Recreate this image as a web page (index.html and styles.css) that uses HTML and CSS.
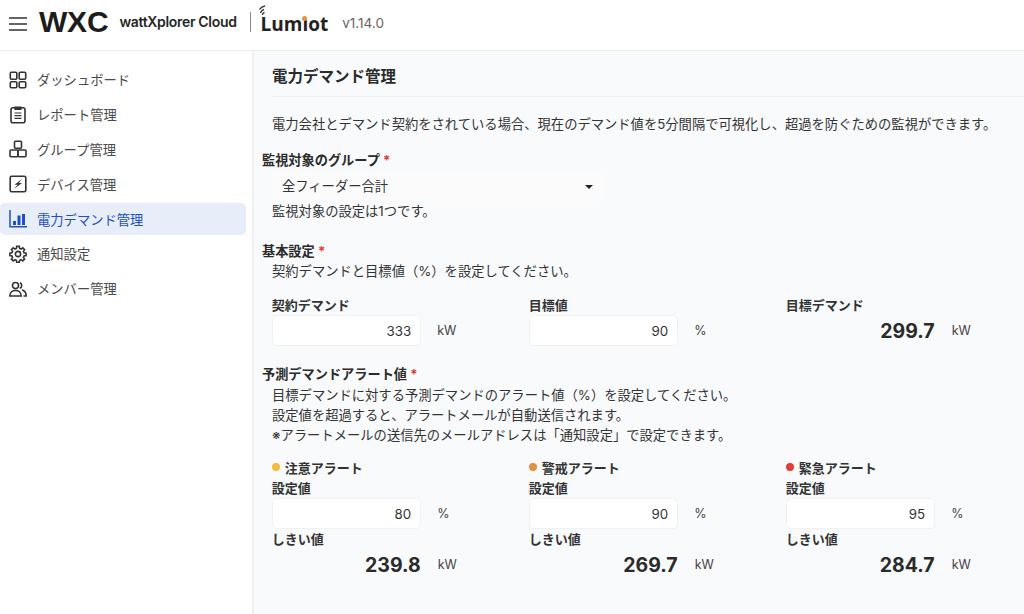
FILE: index.html
```html
<!DOCTYPE html>
<html lang="ja">
<head>
  <meta charset="UTF-8" />
  <title>wattXplorer Cloud</title>
  <link rel="stylesheet" href="styles.css">
</head>
<body>
  <header class="topbar">
    <svg class="menu-icon" viewBox="0 0 18 14" width="18" height="14"><path d="M0 1h18M0 7h18M0 13h18" stroke="#333" stroke-width="1.3" fill="none"/></svg>
    <span class="logo-wxc">WXC</span>
    <span class="logo-name">wattXplorer Cloud</span>
    <span class="logo-sep"></span>
    <span class="logo-lumiot">
      <svg class="lumiot-wifi" viewBox="0 0 12 12" width="12" height="12"><path d="M1.500 8A5 5 0 0 1 5 4.500M.5 4.500A8 8 0 0 1 6 1M3.500 10A2.500 2.500 0 0 1 5.500 7.500" stroke="#333" stroke-width="1.300" fill="none"/></svg>
      Lumıot<span class="lumiot-dot"></span>
    </span>
    <span class="version">v1.14.0</span>
  </header>

  <div class="layout">
    <nav class="sidebar">
      <a class="nav-item">
        <svg viewBox="0 0 18 18" width="18" height="18"><g fill="none" stroke="#333" stroke-width="1.600"><rect x="1.300" y="1.300" width="6.500" height="7" rx="1"/><rect x="10.200" y="1.300" width="6.500" height="7" rx="1"/><rect x="1.300" y="10.700" width="6.500" height="6" rx="1"/><rect x="10.200" y="10.700" width="6.500" height="6" rx="1"/></g></svg>
        ダッシュボード
      </a>
      <a class="nav-item">
        <svg viewBox="0 0 18 18" width="18" height="18"><rect x="2" y="1.800" width="14" height="15" rx="2" fill="none" stroke="#333" stroke-width="1.600"/><path d="M6 1h6v2.500H6zM5.500 7h7M5.500 9.700h7M5.500 12.400h7" stroke="#333" stroke-width="1.200" fill="#333"/></svg>
        レポート管理
      </a>
      <a class="nav-item">
        <svg viewBox="0 0 18 18" width="18" height="18"><g fill="none" stroke="#333" stroke-width="1.600"><rect x="5.500" y="1.300" width="7" height="7" rx="1"/><rect x="1" y="10" width="8" height="6.800" rx="1"/><rect x="9" y="10" width="8" height="6.800" rx="1"/></g></svg>
        グループ管理
      </a>
      <a class="nav-item">
        <svg viewBox="0 0 18 18" width="18" height="18"><rect x="1.200" y="1.200" width="15.600" height="15.600" rx="1.500" fill="none" stroke="#333" stroke-width="1.600"/><path d="M13 4 5.500 9.800h3.200L5 14l8-6H9.800z" fill="#333"/></svg>
        デバイス管理
      </a>
      <a class="nav-item active">
        <svg viewBox="0 0 18 18" width="18" height="18"><path d="M1 0v16.800h17" fill="none" stroke="#1f4fc4" stroke-width="1.500"/><path d="M4 11h3v4H4zM8.500 5.500h3V15h-3zM13 4h3v11h-3z" fill="#1f4fc4"/></svg>
        電力デマンド管理
      </a>
      <a class="nav-item">
        <svg viewBox="0 0 24 24" width="18" height="18"><path fill="none" stroke="#333" stroke-width="2.100" d="M10.300 1.800h3.400l.5 2.800 1.900.8 2.300-1.600 2.400 2.400-1.600 2.300.8 1.900 2.800.5v3.200l-2.800.5-.8 1.900 1.600 2.300-2.400 2.400-2.300-1.600-1.900.8-.5 2.800h-3.400l-.5-2.800-1.900-.8-2.300 1.600-2.400-2.400 1.600-2.300-.8-1.900-2.800-.5v-3.200l2.800-.5.8-1.900-1.600-2.300 2.400-2.400 2.300 1.600 1.900-.8z"/><circle cx="12" cy="12" r="3.500" fill="none" stroke="#333" stroke-width="2.100"/></svg>
        通知設定
      </a>
      <a class="nav-item">
        <svg viewBox="0 0 18 18" width="18" height="18"><g fill="none" stroke="#333" stroke-width="1.600"><circle cx="6.500" cy="5.500" r="3"/><path d="M.8 16c0-7.500 11.400-7.500 11.400 0z"/><path d="M10.800 2.700a3 3 0 0 1 0 5.600M13 10c2.700.6 4.200 2.800 4.200 6h-2.700"/></g></svg>
        メンバー管理
      </a>
    </nav>

    <main class="content">
      <h1 class="page-title">電力デマンド管理</h1>
      <p class="lead">電力会社とデマンド契約をされている場合、現在のデマンド値を5分間隔で可視化し、超過を防ぐための監視ができます。</p>

      <section class="group-section">
        <h2 class="section-label">監視対象のグループ <span class="req">*</span></h2>
        <div class="select-box">全フィーダー合計<span class="caret"></span></div>
        <p class="note">監視対象の設定は1つです。</p>
      </section>

      <section class="basic-section">
        <h2 class="section-label">基本設定 <span class="req">*</span></h2>
        <p class="note">契約デマンドと目標値（%）を設定してください。</p>
        <div class="field-grid">
          <div>
            <div class="field-label">契約デマンド</div>
            <div class="field-row"><div class="num-input">333</div><span class="unit">kW</span></div>
          </div>
          <div>
            <div class="field-label">目標値</div>
            <div class="field-row"><div class="num-input">90</div><span class="unit">%</span></div>
          </div>
          <div>
            <div class="field-label">目標デマンド</div>
            <div class="field-row"><div class="big-value">299.7</div><span class="unit">kW</span></div>
          </div>
        </div>
      </section>

      <section class="alert-section">
        <h2 class="section-label">予測デマンドアラート値 <span class="req">*</span></h2>
        <div class="note-block">
          <p class="note">目標デマンドに対する予測デマンドのアラート値（%）を設定してください。</p>
          <p class="note">設定値を超過すると、アラートメールが自動送信されます。</p>
          <p class="note">※アラートメールの送信先のメールアドレスは「通知設定」で設定できます。</p>
        </div>
        <div class="field-grid alert-grid">
          <div>
            <div class="alert-title"><span class="dot yellow"></span>注意アラート</div>
            <div class="field-label">設定値</div>
            <div class="field-row"><div class="num-input">80</div><span class="unit">%</span></div>
            <div class="field-label">しきい値</div>
            <div class="field-row"><div class="big-value">239.8</div><span class="unit">kW</span></div>
          </div>
          <div>
            <div class="alert-title"><span class="dot orange"></span>警戒アラート</div>
            <div class="field-label">設定値</div>
            <div class="field-row"><div class="num-input">90</div><span class="unit">%</span></div>
            <div class="field-label">しきい値</div>
            <div class="field-row"><div class="big-value">269.7</div><span class="unit">kW</span></div>
          </div>
          <div>
            <div class="alert-title"><span class="dot red"></span>緊急アラート</div>
            <div class="field-label">設定値</div>
            <div class="field-row"><div class="num-input">95</div><span class="unit">%</span></div>
            <div class="field-label">しきい値</div>
            <div class="field-row"><div class="big-value">284.7</div><span class="unit">kW</span></div>
          </div>
        </div>
      </section>
    </main>
  </div>
</body>
</html>
```

FILE: styles.css
```css
* {
  margin: 0;
  padding: 0;
  box-sizing: border-box;
}

html, body {
  height: 100%;
  overflow: hidden;
}

body {
  font-family: "Inter", "Noto Sans CJK JP", sans-serif;
  font-size: 13.3px;
  color: #333;
  background: #fff;
  display: flex;
  flex-direction: column;
}

/* Header */
.topbar {
  height: 51px;
  flex-shrink: 0;
  display: flex;
  align-items: center;
  padding-left: 9px;
  padding-bottom: 7px;
  border-bottom: 1px solid #eceef0;
  background: #fff;
}

.menu-icon {
  margin-right: 12px;
  margin-top: 5px;
}

.logo-wxc {
  font-family: "Liberation Sans", sans-serif;
  font-size: 30px;
  font-weight: 700;
  color: #1c1c1c;
  letter-spacing: -0.2px;
  margin-right: 11px;
}

.logo-name {
  font-size: 14px;
  font-weight: 600;
  color: #262626;
  letter-spacing: -0.32px;
  margin-right: 13px;
}

.logo-sep {
  width: 1px;
  height: 20px;
  background: #888;
  margin-right: 10px;
}

.logo-lumiot {
  position: relative;
  font-family: "Open Sans", sans-serif;
  font-size: 19px;
  font-weight: 700;
  line-height: 28px;
  color: #222;
  margin-right: 14px;
  padding-top: 4px;
}

.lumiot-wifi {
  position: absolute;
  left: -2px;
  top: -1px;
}

.lumiot-dot {
  position: absolute;
  left: 41px;
  top: 10px;
  width: 5px;
  height: 5px;
  border-radius: 50%;
  background: #e8933a;
}

.version {
  font-size: 13.500px;
  color: #666;
  margin-top: 2px;
}

/* Sidebar */
.layout {
  flex: 1;
  display: flex;
  min-height: 0;
}

.sidebar {
  width: 254px;
  flex-shrink: 0;
  padding-top: 13px;
  border-right: 2px solid #eef0f2;
  background: #fff;
}

.nav-item {
  display: flex;
  align-items: center;
  gap: 10px;
  width: 246px;
  height: 31.500px;
  margin-bottom: 3.330px;
  padding-left: 9px;
  font-size: 13.300px;
  color: #4a4a4a;
}

.nav-item.active {
  background: #e7eefa;
  color: #1f4fc4;
  border-radius: 5px;
}

/* Main */
.content {
  flex: 1;
  background: #f9fafc;
  padding-left: 8px;
  overflow: hidden;
}

.page-title {
  font-size: 15.500px;
  font-weight: 700;
  color: #2b2b2b;
  height: 46px;
  line-height: 52px;
  margin-left: 10px;
  border-bottom: 1px solid #edeff1;
}

.lead {
  margin: 17px 0 0 10px;
  line-height: 20px;
}

.section-label {
  font-size: 13.200px;
  font-weight: 700;
  color: #2b2b2b;
  line-height: 20px;
}

.req {
  color: #e53935;
}

.note {
  margin-left: 10px;
  line-height: 20px;
}

.group-section {
  margin-top: 16px;
}

.select-box {
  position: relative;
  width: 331px;
  height: 29px;
  margin: 2px 0 0 10px;
  padding-left: 10px;
  line-height: 29px;
  background: #fbfbfc;
  border-radius: 4px;
}

.caret {
  position: absolute;
  right: 10px;
  top: 13px;
  border-left: 4px solid transparent;
  border-right: 4px solid transparent;
  border-top: 4px solid #222;
}

.basic-section {
  margin-top: 20px;
}

.field-grid {
  display: grid;
  grid-template-columns: repeat(3, 257px);
  margin: 14px 0 0 9.700px;
}

.field-label {
  font-size: 13px;
  font-weight: 700;
  color: #333;
  line-height: 20px;
}

.field-row {
  display: flex;
  align-items: center;
  height: 31px;
}

.num-input {
  width: 149.500px;
  height: 31px;
  line-height: 31px;
  padding-right: 9px;
  text-align: right;
  color: #333;
  background: #fff;
  border: 1px solid #f0f1f3;
  border-radius: 5px;
}

.big-value {
  width: 150px;
  padding-right: 1px;
  text-align: right;
  font-size: 19.500px;
  font-weight: 700;
  color: #2b2b2b;
}

.unit {
  margin-left: 16px;
  font-size: 12.500px;
  color: #444;
}

.alert-section {
  margin-top: 18px;
}

.note-block {
  margin-top: 1px;
}

.alert-grid {
  margin-top: 11px;
}

.alert-title {
  display: flex;
  align-items: center;
  height: 22px;
  font-size: 13px;
  font-weight: 700;
  color: #333;
}

.dot {
  width: 8px;
  height: 8px;
  border-radius: 50%;
  margin-right: 5px;
}

.dot.yellow {
  background: #f2bd3a;
}

.dot.orange {
  background: #e48f3f;
}

.dot.red {
  background: #e23d3d;
}
```
